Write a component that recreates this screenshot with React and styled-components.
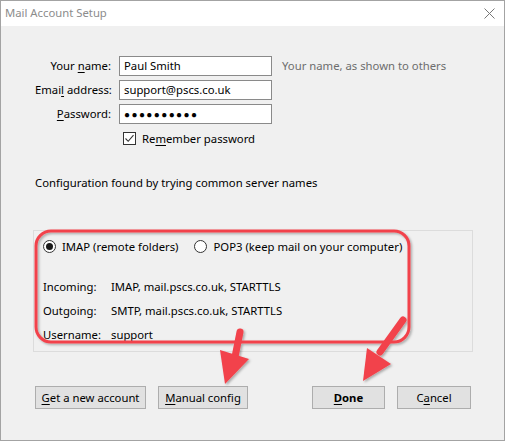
import React from "react";
import styled, { createGlobalStyle } from "styled-components";

const GlobalStyle = createGlobalStyle`
  html, body {
    margin: 0;
    padding: 0;
    background: #ffffff;
  }
  body {
    font-family: "Noto Sans", "Open Sans", sans-serif;
    font-size: 11.3px;
    line-height: 16px;
    color: #000;
  }
`;

const Window = styled.div`
  position: relative;
  box-sizing: border-box;
  width: 505px;
  height: 441px;
  border: 1px solid #a3a3a3;
  background: #f0f0f0;
  display: flex;
  flex-direction: column;
`;

const TitleBar = styled.div`
  height: 25px;
  background: #fff;
  display: flex;
  align-items: center;
  justify-content: space-between;
  padding: 0 9px 0 4px;
`;

const Title = styled.span`
  color: #8c8c8c;
  padding-bottom: 1px;
`;

const Body = styled.div`
  flex: 1;
  padding: 30px 33px 0 34px;
  display: flex;
  flex-direction: column;
`;

const FormGrid = styled.div`
  display: grid;
  grid-template-columns: 75px 153px auto;
  column-gap: 9px;
  row-gap: 4px;
  align-items: center;
`;

const FieldLabel = styled.label`
  text-align: right;
  white-space: nowrap;
  margin-right: -1px;
`;

const TextBox = styled.div`
  box-sizing: border-box;
  height: 20px;
  border: 1px solid #8a8a8a;
  background: #fff;
  padding: 0 4px;
  display: flex;
  align-items: center;
  letter-spacing: ${(p) => (p.$secret ? "1.4px" : "0")};
  font-size: ${(p) => (p.$secret ? "10px" : "inherit")};
`;

const Hint = styled.span`
  color: #6d6d6d;
  white-space: nowrap;
  margin-left: 1px;
`;

const Key = styled.span`
  text-decoration: underline;
  text-underline-offset: 2px;
`;

const CheckRow = styled.div`
  grid-column: 2 / 4;
  height: 13px;
  margin-top: 4px;
  padding-left: 4px;
  display: flex;
  align-items: center;
  gap: 6px;
`;

const CheckBox = styled.span`
  box-sizing: border-box;
  width: 13px;
  height: 13px;
  border: 1px solid #333;
  background: #fff;
  display: flex;
  align-items: center;
  justify-content: center;
`;

const Status = styled.div`
  margin-top: 30px;
`;

const GroupBox = styled.div`
  margin: 39px -2px 0 -2px;
  height: 122px;
  box-sizing: border-box;
  border: 1px solid #dcdcdc;
  padding: 9px 9px 0 9px;
`;

const RadioRow = styled.div`
  height: 13px;
  display: flex;
  align-items: center;
  gap: 16px;
`;

const RadioOption = styled.label`
  display: flex;
  align-items: center;
  gap: 6px;
`;

const Radio = styled.span`
  box-sizing: border-box;
  width: 13px;
  height: 13px;
  border-radius: 50%;
  border: 1px solid #333;
  background: #fff;
  display: flex;
  align-items: center;
  justify-content: center;

  &::after {
    content: "";
    width: 7px;
    height: 7px;
    border-radius: 50%;
    background: ${(p) => (p.$checked ? "#1a1a1a" : "transparent")};
  }
`;

const ServerGrid = styled.div`
  margin-top: 26px;
  display: grid;
  grid-template-columns: 68px auto;
  row-gap: 8px;
`;

const ButtonBar = styled.div`
  margin-top: 34px;
  display: flex;
  justify-content: space-between;
`;

const ButtonGroup = styled.div`
  display: flex;
  gap: 12px;
`;

const Button = styled.button`
  box-sizing: border-box;
  height: 23px;
  width: ${(p) => p.$w}px;
  border: 1px solid #adadad;
  background: #e1e1e1;
  font-family: inherit;
  font-size: inherit;
  font-weight: ${(p) => (p.$primary ? 700 : 400)};
  color: #000;
  padding: 0;
  display: flex;
  align-items: center;
  justify-content: center;
`;

const Annotations = styled.svg`
  position: absolute;
  left: -1px;
  top: -1px;
  pointer-events: none;
`;

const RED = "#f2424b";

function CloseIcon() {
  return (
    <svg width="11" height="11" viewBox="0 0 11 11">
      <path d="M0.5 0.5 L10.5 10.5 M10.5 0.5 L0.5 10.5" stroke="#777" strokeWidth="1" />
    </svg>
  );
}

function CheckMark() {
  return (
    <svg width="11" height="11" viewBox="0 0 11 11">
      <path d="M1.5 5.5 L4.2 8.3 L9.5 2.2" fill="none" stroke="#333" strokeWidth="1.1" />
    </svg>
  );
}

// red callout box and arrows pointing at the buttons
function Callouts() {
  return (
    <Annotations width="506" height="442" viewBox="0 0 506 442">
      <defs>
        <filter id="shade" x="-10%" y="-10%" width="130%" height="130%">
          <feDropShadow dx="1.5" dy="1.5" stdDeviation="1.2" floodColor="#000" floodOpacity="0.3" />
        </filter>
      </defs>
      <g filter="url(#shade)">
        <rect x="36" y="231" width="373" height="111" rx="15" fill="none" stroke={RED} strokeWidth="3" />
        <path d="M240 332 L234 362" stroke={RED} strokeWidth="7" strokeLinecap="round" fill="none" />
        <path d="M220 350 L249 359 L225 384 Z" fill={RED} />
        <path d="M403 320 L380 352" stroke={RED} strokeWidth="7" strokeLinecap="round" fill="none" />
        <path d="M367 348 L391 364 L363 381 Z" fill={RED} />
      </g>
    </Annotations>
  );
}

export default function App() {
  return (
    <>
      <GlobalStyle />
      <Window>
        <TitleBar>
          <Title>Mail Account Setup</Title>
          <CloseIcon />
        </TitleBar>
        <Body>
          <FormGrid>
            <FieldLabel>Your <Key>n</Key>ame:</FieldLabel>
            <TextBox>Paul Smith</TextBox>
            <Hint>Your name, as shown to others</Hint>

            <FieldLabel>Emai<Key>l</Key> address:</FieldLabel>
            <TextBox>support@pscs.co.uk</TextBox>
            <span />

            <FieldLabel><Key>P</Key>assword:</FieldLabel>
            <TextBox $secret>●●●●●●●●●●</TextBox>
            <span />

            <span />
            <CheckRow>
              <CheckBox><CheckMark /></CheckBox>
              <span>Re<Key>m</Key>ember password</span>
            </CheckRow>
          </FormGrid>

          <Status>Configuration found by trying common server names</Status>

          <GroupBox>
            <RadioRow>
              <RadioOption><Radio $checked />IMAP (remote folders)</RadioOption>
              <RadioOption><Radio />POP3 (keep mail on your computer)</RadioOption>
            </RadioRow>
            <ServerGrid>
              <span>Incoming:</span>
              <span>IMAP, mail.pscs.co.uk, STARTTLS</span>
              <span>Outgoing:</span>
              <span>SMTP, mail.pscs.co.uk, STARTTLS</span>
              <span>Username:</span>
              <span>support</span>
            </ServerGrid>
          </GroupBox>

          <ButtonBar>
            <ButtonGroup>
              <Button $w={111}><Key>G</Key>et a new account</Button>
              <Button $w={90}><Key>M</Key>anual config</Button>
            </ButtonGroup>
            <ButtonGroup>
              <Button $w={73} $primary><Key>D</Key>one</Button>
              <Button $w={74}>C<Key>a</Key>ncel</Button>
            </ButtonGroup>
          </ButtonBar>
        </Body>
        <Callouts />
      </Window>
    </>
  );
}
